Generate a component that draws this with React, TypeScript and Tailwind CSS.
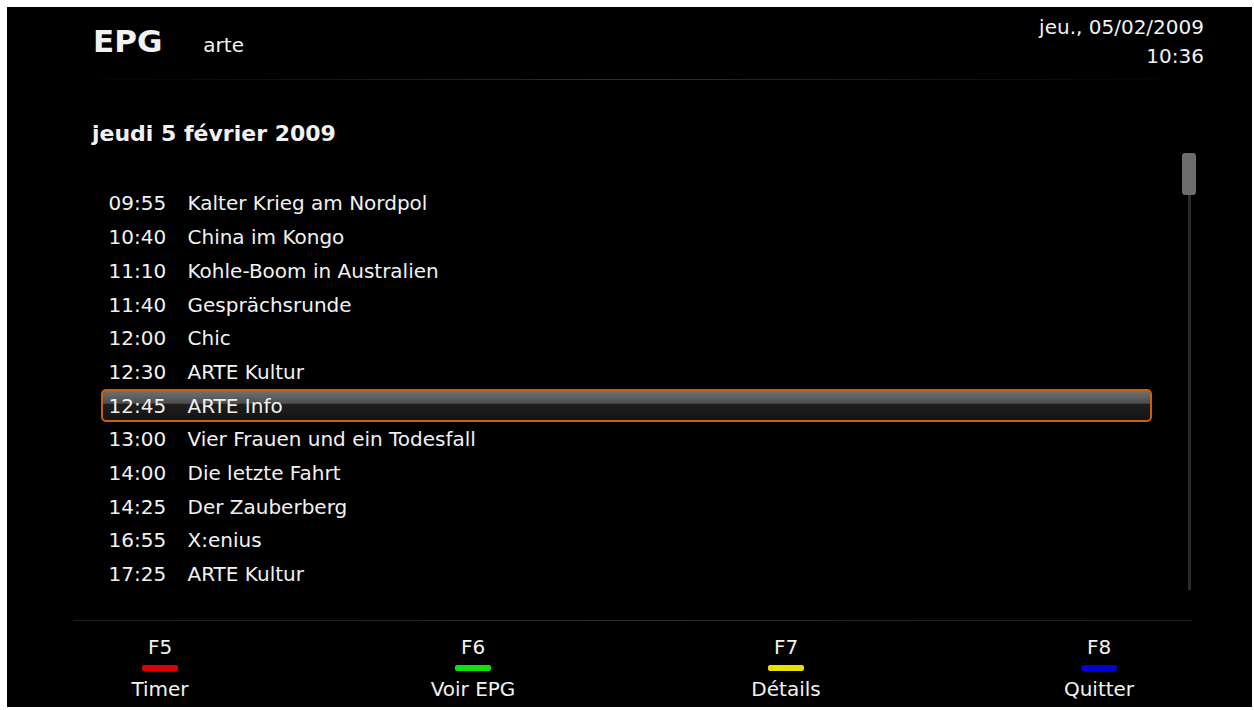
import React from 'react';

const programmes = [
    { time: '09:55', title: 'Kalter Krieg am Nordpol' },
    { time: '10:40', title: 'China im Kongo' },
    { time: '11:10', title: 'Kohle-Boom in Australien' },
    { time: '11:40', title: 'Gesprächsrunde' },
    { time: '12:00', title: 'Chic' },
    { time: '12:30', title: 'ARTE Kultur' },
    { time: '12:45', title: 'ARTE Info', selected: true },
    { time: '13:00', title: 'Vier Frauen und ein Todesfall' },
    { time: '14:00', title: 'Die letzte Fahrt' },
    { time: '14:25', title: 'Der Zauberberg' },
    { time: '16:55', title: 'X:enius' },
    { time: '17:25', title: 'ARTE Kultur' },
];

const keys = [
    { key: 'F5', label: 'Timer', color: 'bg-[#e00000]' },
    { key: 'F6', label: 'Voir EPG', color: 'bg-[#10e010]' },
    { key: 'F7', label: 'Détails', color: 'bg-[#e8e000]' },
    { key: 'F8', label: 'Quitter', color: 'bg-[#0000d8]' },
];

export default function App() {
    return (
        <div className="w-[1254px] h-[710px] bg-white p-[7px] pr-[2px] pb-[3px] font-['DejaVu_Sans',sans-serif]">
            <div className="w-full h-full bg-black text-[#f2f2f2] flex flex-col overflow-hidden">
                {/* Header */}
                <div className="flex justify-between pl-[86px] pr-[48px] pt-[6px] h-[72px]">
                    <div className="flex items-baseline pt-[13px]">
                        <span className="text-[31px] font-bold leading-none">EPG</span>
                        <span className="ml-[41px] text-[20px] leading-none">arte</span>
                    </div>
                    <div className="text-right text-[20px] leading-[29px]">
                        <div>jeu., 05/02/2009</div>
                        <div>10:36</div>
                    </div>
                </div>
                <div className="h-px ml-[50px] mr-[50px] bg-gradient-to-r from-transparent via-[#2e2e2e] to-transparent" />

                {/* Day */}
                <div className="pl-[85px] pt-[43px] text-[22px] font-bold leading-none">jeudi 5 février 2009</div>

                {/* List + scrollbar */}
                <div className="flex mt-[8px] h-[446px]">
                    <div className="flex-1 pl-[94px] pt-[34px]">
                        {programmes.map((p) => (
                            <div
                                key={p.time + p.title}
                                className={
                                    p.selected
                                        ? 'flex items-center h-[33.7px] w-[1051px] pl-[5.5px] rounded-[5px] border-2 border-[#cc5e0c] bg-[linear-gradient(to_bottom,#707070_0%,#4e4e4e_42%,#1e1e1e_46%,#141414_100%)]'
                                        : 'flex items-center h-[33.7px] pl-[5.5px] border-2 border-transparent'
                                }
                            >
                                <span className="w-[79px] text-[20px]">{p.time}</span>
                                <span className="text-[20px]">{p.title}</span>
                            </div>
                        ))}
                    </div>
                    <div className="w-[14px] mr-[56px] flex flex-col items-center">
                        <div className="w-[14px] h-[42px] rounded-[3px] bg-[#6c6c6c] shrink-0" />
                        <div className="w-[3px] flex-1 bg-[#2c2c2c] mb-[6px]" />
                    </div>
                </div>

                {/* Footer */}
                <div className="h-px mt-[24px] ml-[66px] mr-[60px] bg-gradient-to-r from-[#1a1a1a] via-[#2c2c2c] to-[#1a1a1a]" />
                <div className="flex gap-[113px] pl-[53px] pt-[12px]">
                    {keys.map((k) => (
                        <div key={k.key} className="w-[200px] shrink-0 flex flex-col items-center">
                            <span className="text-[20px] leading-[28px]">{k.key}</span>
                            <span className={`mt-[4px] w-[36px] h-[6px] rounded-[2px] ${k.color}`} />
                            <span className="text-[20px] leading-[36px]">{k.label}</span>
                        </div>
                    ))}
                </div>
            </div>
        </div>
    );
}
